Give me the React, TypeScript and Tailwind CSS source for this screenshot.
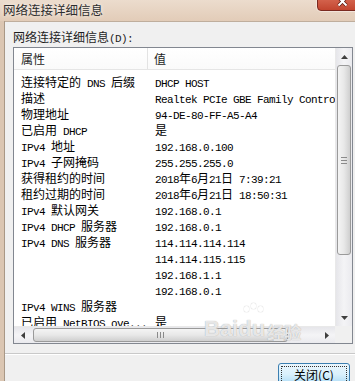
import React from "react";

const CJK = /[\u3000-\u9fff\uff00-\uffef]/;

function Mixed({ text }: { text: string }) {
  const parts = text.match(/[\u3000-\u9fff\uff00-\uffef]+|[^\u3000-\u9fff\uff00-\uffef]+/g) || [];
  return (
    <>
      {parts.map((p, i) =>
        CJK.test(p) ? (
          <span key={i} className="font-['Noto_Sans_CJK_SC',sans-serif] text-[12px]">
            {p}
          </span>
        ) : (
          <span key={i} className="font-['Liberation_Mono',monospace] text-[11px] tracking-[-0.6px]">
            {p}
          </span>
        )
      )}
    </>
  );
}

const rows: [string, string][] = [
  ["连接特定的 DNS 后缀", "DHCP HOST"],
  ["描述", "Realtek PCIe GBE Family Controller"],
  ["物理地址", "94-DE-80-FF-A5-A4"],
  ["已启用 DHCP", "是"],
  ["IPv4 地址", "192.168.0.100"],
  ["IPv4 子网掩码", "255.255.255.0"],
  ["获得租约的时间", "2018年6月21日 7:39:21"],
  ["租约过期的时间", "2018年6月21日 18:50:31"],
  ["IPv4 默认网关", "192.168.0.1"],
  ["IPv4 DHCP 服务器", "192.168.0.1"],
  ["IPv4 DNS 服务器", "114.114.114.114"],
  ["", "114.114.115.115"],
  ["", "192.168.1.1"],
  ["", "192.168.0.1"],
  ["IPv4 WINS 服务器", ""],
  ["已启用 NetBIOS ove...", "是"],
];

function Arrow({ dir }: { dir: "up" | "down" | "left" | "right" }) {
  const pts =
    dir === "up"
      ? "0,4 7,4 3.5,0"
      : dir === "down"
      ? "0,0 7,0 3.5,4"
      : dir === "left"
      ? "4,0 4,7 0,3.5"
      : "0,0 0,7 4,3.5";
  const w = dir === "up" || dir === "down" ? 7 : 4;
  const h = dir === "up" || dir === "down" ? 4 : 7;
  return (
    <svg width={w} height={h} viewBox={`0 0 ${w} ${h}`}>
      <polygon points={pts} fill="#3f3f3f" />
    </svg>
  );
}

export default function App() {
  return (
    <div className="w-[355px] h-[381px] overflow-hidden relative flex flex-col bg-[#e3cfbc]">
      {/* title bar */}
      <div className="h-[21px] shrink-0 pl-[3px] bg-gradient-to-b from-[#ecdccd] to-[#e2ccb8] font-['Noto_Sans_CJK_SC',sans-serif] text-[12.5px] leading-[20px] text-[#2e2e2e] [text-shadow:0_0_4px_#fff]">
        网络连接详细信息
      </div>
      {/* close button */}
      <div className="absolute left-[317px] top-[-10px] w-[48px] h-[21px] rounded-[4px] border border-[#7a2a20] bg-gradient-to-b from-[#e8a493] via-[#d2604a] to-[#c2452f] shadow-[0_0_0_1px_#f3e4da]">
        <svg className="absolute left-[19px] top-[5px]" width="11" height="11" viewBox="0 0 11 11">
          <path d="M1.5 1.5 L9.5 9.5 M9.5 1.5 L1.5 9.5" stroke="#5a1a10" strokeWidth="3.4" />
          <path d="M1.5 1.5 L9.5 9.5 M9.5 1.5 L1.5 9.5" stroke="#ffffff" strokeWidth="2" />
        </svg>
      </div>

      <div className="flex flex-1 min-h-0">
        <div className="w-[5px] shrink-0 bg-[#dbc6b2] border-r border-[#a99886]" />
        <div className="flex-1 min-w-0 flex flex-col bg-[#f0f0f0] border-t border-[#bfae9d] pl-[8px] pr-[2px]">
          <div className="mt-[6px] h-[16px] leading-[16px] whitespace-pre text-[#1e1e1e]">
            <Mixed text="网络连接详细信息(D):" />
          </div>

          {/* list view */}
          <div className="mt-[3px] h-[297px] shrink-0 border border-[#828790] bg-white flex flex-col">
            <div className="flex flex-1 min-h-0">
              {/* content */}
              <div className="flex-1 min-w-0 overflow-hidden flex flex-col">
                <div className="h-[22px] shrink-0 flex border-b border-[#e5e5e5] bg-gradient-to-b from-white to-[#fafafa]">
                  <div className="w-[134px] shrink-0 border-r border-[#e3e3e3] pl-[7px] leading-[21px] font-['Noto_Sans_CJK_SC',sans-serif] text-[12px] text-[#1e1e1e]">
                    属性
                  </div>
                  <div className="pl-[6px] leading-[21px] font-['Noto_Sans_CJK_SC',sans-serif] text-[12px] text-[#1e1e1e]">
                    值
                  </div>
                </div>
                <div className="pt-[3px] flex flex-col">
                  {rows.map(([k, v], i) => (
                    <div key={i} className="h-[16px] leading-[16px] flex whitespace-pre text-black">
                      <div className="w-[134px] shrink-0 pl-[7px] overflow-hidden">
                        <Mixed text={k} />
                      </div>
                      <div className="pl-[7px]">
                        <Mixed text={v} />
                      </div>
                    </div>
                  ))}
                </div>
              </div>
              {/* vertical scrollbar */}
              <div className="w-[17px] shrink-0 flex flex-col border-l border-[#e9e9e9] bg-gradient-to-r from-[#e6e6ea] via-[#f4f4f6] to-[#eaeaee]">
                <div className="h-[17px] flex items-center justify-center">
                  <Arrow dir="up" />
                </div>
                <div className="h-[190px] mx-px rounded-[3px] border border-[#9a9a9a] bg-gradient-to-r from-[#f4f4f4] via-[#e8e8e8] to-[#cfcfcf] flex flex-col items-center justify-center gap-[2px]">
                  <div className="w-[6px] h-px bg-[#8a8a8a]" />
                  <div className="w-[6px] h-px bg-[#8a8a8a]" />
                  <div className="w-[6px] h-px bg-[#8a8a8a]" />
                </div>
                <div className="flex-1" />
                <div className="h-[17px] flex items-center justify-center">
                  <Arrow dir="down" />
                </div>
              </div>
            </div>
            {/* horizontal scrollbar */}
            <div className="h-[17px] shrink-0 flex">
              <div className="flex-1 flex items-stretch border-t border-[#e9e9e9] bg-gradient-to-b from-[#e6e6ea] via-[#f4f4f6] to-[#eaeaee]">
                <div className="w-[17px] flex items-center justify-center">
                  <Arrow dir="left" />
                </div>
                <div className="w-[255px] ml-[2px] my-px rounded-[3px] border border-[#9a9a9a] bg-gradient-to-b from-[#f4f4f4] via-[#e8e8e8] to-[#cfcfcf] flex items-center justify-center gap-[2px]">
                  <div className="w-px h-[6px] bg-[#8a8a8a]" />
                  <div className="w-px h-[6px] bg-[#8a8a8a]" />
                  <div className="w-px h-[6px] bg-[#8a8a8a]" />
                </div>
                <div className="flex-1" />
                <div className="w-[17px] flex items-center justify-center">
                  <Arrow dir="right" />
                </div>
              </div>
              <div className="w-[17px] shrink-0 bg-[#f0f0f0]" />
            </div>
          </div>

          {/* separator */}
          <div className="mt-[9px] -ml-[8px] -mr-[2px] h-px bg-[#c9c9c9] shrink-0" />
          <div className="-ml-[8px] -mr-[2px] h-px bg-white shrink-0" />

          {/* button */}
          <div className="mt-[8px] self-end mr-[3px] w-[72px] h-[23px] shrink-0 rounded-[3px] border border-[#3c7fb1] bg-gradient-to-b from-[#eaf6fd] via-[#d9f0fc] to-[#a7d9f5] p-[2px]">
            <div className="w-full h-full border border-dotted border-[#333] flex items-center justify-center font-['Noto_Sans_CJK_SC',sans-serif] text-[12px] text-black leading-none">
              关闭(C)
            </div>
          </div>
        </div>
      </div>

      {/* watermark */}
      <div className="absolute left-[204px] top-[318px] pointer-events-none select-none">
        <div className="flex items-end font-['Liberation_Sans',sans-serif] font-bold text-[22px] leading-none text-white/75 [text-shadow:0_0_1px_#9a9a9a]">
          <span>Bai</span>
          <span className="relative">
            du
            <span className="absolute left-[6px] -top-[12px] flex gap-[2px]">
              <span className="w-[5px] h-[6px] rounded-full bg-white/70 shadow-[0_0_1px_#999]" />
              <span className="w-[5px] h-[6px] rounded-full bg-white/70 shadow-[0_0_1px_#999] -mt-[3px]" />
              <span className="w-[5px] h-[6px] rounded-full bg-white/70 shadow-[0_0_1px_#999]" />
            </span>
          </span>
          <span className="ml-[2px] font-['Noto_Sans_CJK_SC',sans-serif] text-[17px]">经验</span>
        </div>
      </div>
    </div>
  );
}
